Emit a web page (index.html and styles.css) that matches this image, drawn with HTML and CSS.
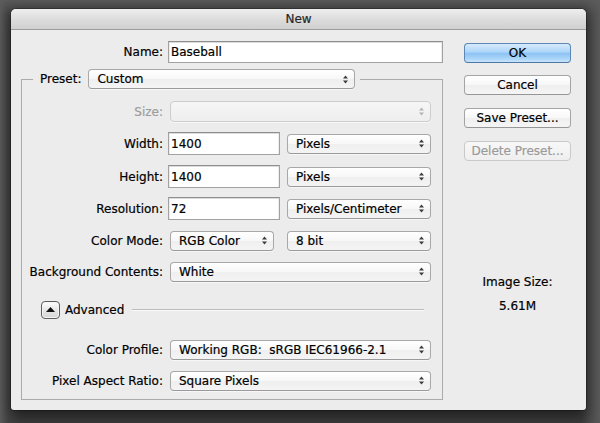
FILE: index.html
```html
<!DOCTYPE html>
<html lang="en">
<head>
<meta charset="utf-8">
<title>New</title>
<link rel="stylesheet" href="styles.css">
</head>
<body>
<div class="window">
  <div class="titlebar">New</div>
  <div class="content">
    <div class="main">
      <div class="name-row">
        <span class="name-label">Name:</span>
        <input class="field name-field" type="text" value="Baseball">
      </div>
      <fieldset class="group">
        <legend class="legend">
          <div class="legend-inner">
            <span class="legend-label">Preset:</span>
            <div class="popup preset"><span>Custom</span><svg class="arrows" viewBox="0 0 5 9" width="5" height="9"><path d="M0 3.6 L2.5 0.5 L5 3.6 Z M0 5.4 L2.5 8.5 L5 5.4 Z"/></svg></div>
          </div>
        </legend>
        <div class="rows">
          <div class="row r-size">
            <span class="lbl dim">Size:</span>
            <div class="popup wide disabled"><span></span><svg class="arrows" viewBox="0 0 5 9" width="5" height="9"><path d="M0 3.6 L2.5 0.5 L5 3.6 Z M0 5.4 L2.5 8.5 L5 5.4 Z"/></svg></div>
          </div>
          <div class="row r-width">
            <span class="lbl">Width:</span>
            <input class="field num" type="text" value="1400">
            <div class="popup unit"><span>Pixels</span><svg class="arrows" viewBox="0 0 5 9" width="5" height="9"><path d="M0 3.6 L2.5 0.5 L5 3.6 Z M0 5.4 L2.5 8.5 L5 5.4 Z"/></svg></div>
          </div>
          <div class="row r-height">
            <span class="lbl">Height:</span>
            <input class="field num" type="text" value="1400">
            <div class="popup unit"><span>Pixels</span><svg class="arrows" viewBox="0 0 5 9" width="5" height="9"><path d="M0 3.6 L2.5 0.5 L5 3.6 Z M0 5.4 L2.5 8.5 L5 5.4 Z"/></svg></div>
          </div>
          <div class="row r-res">
            <span class="lbl">Resolution:</span>
            <input class="field num" type="text" value="72">
            <div class="popup unit"><span>Pixels/Centimeter</span><svg class="arrows" viewBox="0 0 5 9" width="5" height="9"><path d="M0 3.6 L2.5 0.5 L5 3.6 Z M0 5.4 L2.5 8.5 L5 5.4 Z"/></svg></div>
          </div>
          <div class="row r-mode">
            <span class="lbl">Color Mode:</span>
            <div class="popup mode"><span>RGB Color</span><svg class="arrows" viewBox="0 0 5 9" width="5" height="9"><path d="M0 3.6 L2.5 0.5 L5 3.6 Z M0 5.4 L2.5 8.5 L5 5.4 Z"/></svg></div>
            <div class="popup unit bits"><span>8 bit</span><svg class="arrows" viewBox="0 0 5 9" width="5" height="9"><path d="M0 3.6 L2.5 0.5 L5 3.6 Z M0 5.4 L2.5 8.5 L5 5.4 Z"/></svg></div>
          </div>
          <div class="row r-bg">
            <span class="lbl">Background Contents:</span>
            <div class="popup wide"><span>White</span><svg class="arrows" viewBox="0 0 5 9" width="5" height="9"><path d="M0 3.6 L2.5 0.5 L5 3.6 Z M0 5.4 L2.5 8.5 L5 5.4 Z"/></svg></div>
          </div>
          <div class="row r-adv">
            <div class="disclosure"><svg viewBox="0 0 9 5" width="9" height="5"><path d="M0 5 L4.5 0 L9 5 Z"/></svg></div>
            <span class="adv-label">Advanced</span>
            <div class="sep"></div>
          </div>
          <div class="row r-profile">
            <span class="lbl">Color Profile:</span>
            <div class="popup wide"><span>Working RGB:&nbsp; sRGB IEC61966-2.1</span><svg class="arrows" viewBox="0 0 5 9" width="5" height="9"><path d="M0 3.6 L2.5 0.5 L5 3.6 Z M0 5.4 L2.5 8.5 L5 5.4 Z"/></svg></div>
          </div>
          <div class="row r-pixel">
            <span class="lbl">Pixel Aspect Ratio:</span>
            <div class="popup wide"><span>Square Pixels</span><svg class="arrows" viewBox="0 0 5 9" width="5" height="9"><path d="M0 3.6 L2.5 0.5 L5 3.6 Z M0 5.4 L2.5 8.5 L5 5.4 Z"/></svg></div>
          </div>
        </div>
      </fieldset>
    </div>
    <div class="side">
      <div class="btn default">OK</div>
      <div class="btn b-cancel">Cancel</div>
      <div class="btn b-save">Save Preset...</div>
      <div class="btn b-delete disabled">Delete Preset...</div>
      <div class="size-title">Image Size:</div>
      <div class="size-value">5.61M</div>
    </div>
  </div>
</div>
</body>
</html>
```
FILE: styles.css
```css
html, body {
  margin: 0;
  padding: 0;
}
body {
  width: 600px;
  height: 423px;
  overflow: hidden;
  font-family: "DejaVu Sans", "Liberation Sans", sans-serif;
  font-size: 12px;
  color: #000;
  -webkit-text-stroke: 0.2px currentColor;
  background:
    linear-gradient(to bottom, rgba(92,92,92,0.9) 0, rgba(60,60,60,0) 14px),
    linear-gradient(to right, #5a5a5a 0, #434343 8px, #3c3c3c 20px, #3c3c3c 582px, #4e4e4e 592px, #5a5a5a 600px);
}
.window {
  margin: 9px 0 0 11px;
  width: 575px;
  background: #ececec;
  border-radius: 5px 5px 3px 3px;
  overflow: hidden;
  box-shadow: 0 0 0 1px rgba(0,0,0,0.25), 0 6px 14px rgba(0,0,0,0.5);
}
.titlebar {
  height: 20px;
  line-height: 21px;
  text-align: center;
  color: #262626;
  border-bottom: 1px solid #9c9c9c;
  background: linear-gradient(#eeeeee, #dadada 60%, #d0d0d0);
}
.content {
  display: flex;
  gap: 21px;
  padding: 11px 15px 10px 10px;
}
.main {
  width: 422px;
  flex: none;
}
.name-row {
  display: flex;
  align-items: center;
  height: 22px;
}
.name-label {
  width: 142px;
  margin-right: 5px;
  text-align: right;
}
.field {
  box-sizing: border-box;
  margin: 0;
  padding: 0 2px;
  font: inherit;
  color: #000;
  background: #fff;
  border: 1px solid #a2a2a2;
  border-top-color: #8e8e8e;
  box-shadow: inset 0 1px 0 #dcdcdc, inset 1px 0 0 #ececec, inset -1px 0 0 #ececec;
  outline: none;
  border-radius: 0;
}
.name-field {
  width: 275px;
  height: 22px;
}
.group {
  margin: 6px 0 0;
  padding: 0 11px 7px 4px;
  border: 1px solid #ababab;
  min-width: 0;
}
.legend {
  margin-left: 7px;
  padding: 0 5px 0 7px;
}
.legend-inner {
  display: flex;
  align-items: center;
  height: 20px;
}
.legend-label {
  margin-right: 7px;
}
.popup {
  box-sizing: border-box;
  height: 20px;
  display: flex;
  align-items: center;
  justify-content: space-between;
  padding: 0 6px 0 8px;
  border: 1px solid #a8a8a8;
  border-bottom-color: #9a9a9a;
  border-radius: 4px;
  background: linear-gradient(#ffffff, #f7f7f7 50%, #efefef 51%, #f4f4f4);
  box-shadow: 0 1px 0 rgba(255,255,255,0.6);
  white-space: nowrap;
}
.arrows {
  flex: none;
  fill: #3c3c3c;
}
.preset {
  width: 267px;
}
.rows {
  display: flex;
  flex-direction: column;
}
.row {
  display: flex;
  align-items: center;
  height: 23px;
}
.lbl {
  flex: none;
  width: 137px;
  margin-right: 5px;
  text-align: right;
  white-space: nowrap;
}
.dim {
  color: #9c9c9c;
}
.num {
  width: 112px;
  height: 23px;
}
.unit {
  width: 144px;
  margin-left: 7px;
}
.bits {
  margin-left: 13px;
}
.wide {
  width: 261px;
  margin-left: 2px;
}
.mode {
  width: 104px;
  margin-left: 2px;
}
.popup.disabled {
  height: 21px;
  border-color: #cdcdcd;
  background: linear-gradient(#f6f6f6, #eeeeee);
}
.popup.disabled .arrows {
  fill: #b4b4b4;
}
.r-size { margin-top: 11px; }
.r-width { margin-top: 9px; }
.r-height { margin-top: 10px; }
.r-res { margin-top: 9px; }
.r-mode { margin-top: 9px; }
.r-bg { margin-top: 8px; }
.r-adv { margin-top: 15px; }
.r-profile { margin-top: 17px; }
.r-pixel { margin-top: 8px; }
.disclosure {
  box-sizing: border-box;
  flex: none;
  width: 19px;
  height: 18px;
  margin-left: 15px;
  display: flex;
  align-items: center;
  justify-content: center;
  border: 1px solid #5e5e5e;
  border-radius: 4px;
  background: linear-gradient(#ffffff, #e6e6e6 50%, #d6d6d6);
  box-shadow: inset 0 0 0 1px #f4f4f4;
}
.disclosure svg {
  fill: #111;
  margin-top: -1px;
}
.adv-label {
  margin-left: 5px;
}
.sep {
  flex: 1;
  height: 0;
  margin: 0 7px 0 8px;
  border-top: 1px solid #bcbcbc;
  border-bottom: 1px solid #fafafa;
}
.side {
  width: 107px;
  flex: none;
  display: flex;
  flex-direction: column;
  padding-top: 2px;
}
.btn {
  box-sizing: border-box;
  height: 20px;
  line-height: 18px;
  text-align: center;
  border: 1px solid #a4a4a4;
  border-bottom-color: #969696;
  border-radius: 4px;
  background: linear-gradient(#ffffff, #f7f7f7 50%, #efefef 51%, #f5f5f5);
  white-space: nowrap;
}
.btn.default {
  border-color: #5f87b6;
  border-bottom-color: #4f77a6;
  background: linear-gradient(#d7eafc, #acd5f9 45%, #8dc3f4 52%, #a8d4f8 80%, #c8e5fc);
}
.b-cancel { margin-top: 12px; }
.b-save { margin-top: 13px; }
.b-delete { margin-top: 13px; }
.btn.disabled {
  color: #9a9a9a;
  border-color: #c9c9c9;
  background: linear-gradient(#f8f8f8, #efefef);
}
.size-title {
  margin-top: 113px;
  line-height: 16px;
  text-align: center;
}
.size-value {
  margin-top: 8px;
  line-height: 16px;
  text-align: center;
}
```
